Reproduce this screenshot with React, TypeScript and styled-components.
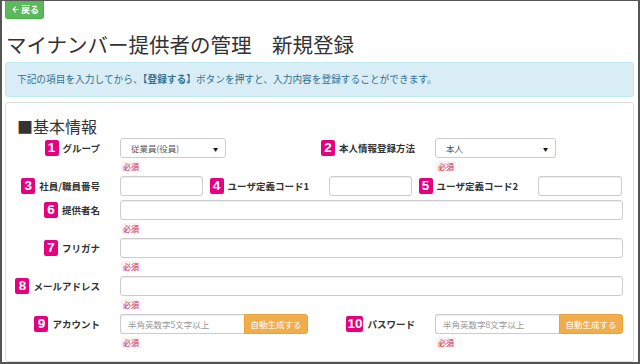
import React from 'react';
import styled, { createGlobalStyle } from 'styled-components';
import { FaArrowLeft } from 'react-icons/fa';

const GlobalStyle = createGlobalStyle`
  * {
    box-sizing: border-box;
  }
  body {
    margin: 0;
    background: #fff;
    font-family: 'Noto Sans CJK JP', 'Liberation Sans', sans-serif;
    color: #333;
  }
`;

type FieldProps = {
  num: number;
  label: string;
  width?: number;
  required?: boolean;
  children: React.ReactNode;
};

const Field = ({ num, label, width, required, children }: FieldProps) => (
  <FieldWrap $width={width}>
    <Label>
      <Badge>{num}</Badge>
      <LabelText>{label}</LabelText>
    </Label>
    <Control>
      {children}
      {required && <Required>必須</Required>}
    </Control>
  </FieldWrap>
);

const App = () => {
  return (
    <Frame>
      <GlobalStyle />
      <BackButton>
        <FaArrowLeft size={7} />
        戻る
      </BackButton>
      <Title>マイナンバー提供者の管理　新規登録</Title>
      <Alert>
        下記の項目を入力してから、<b>【登録する】</b>ボタンを押すと、入力内容を登録することができます。
      </Alert>
      <Panel>
        <Heading>■基本情報</Heading>

        <Row>
          <Field num={1} label="グループ" width={315} required>
            <Select $width={106}>
              <span>従業員(役員)</span>
              <Caret>▼</Caret>
            </Select>
          </Field>
          <Field num={2} label="本人情報登録方法" width={297} required>
            <Select $width={121}>
              <span>本人</span>
              <Caret>▼</Caret>
            </Select>
          </Field>
        </Row>

        <Row>
          <Field num={3} label="社員/職員番号" width={209}>
            <Input $width={83} />
          </Field>
          <Field num={4} label="ユーザ定義コード1" width={209}>
            <Input $width={83} />
          </Field>
          <Field num={5} label="ユーザ定義コード2" width={194}>
            <Input $width={84} />
          </Field>
        </Row>

        <Row>
          <Field num={6} label="提供者名" required>
            <Input />
          </Field>
        </Row>

        <Row>
          <Field num={7} label="フリガナ" required>
            <Input />
          </Field>
        </Row>

        <Row>
          <Field num={8} label="メールアドレス" required>
            <Input />
          </Field>
        </Row>

        <Row>
          <Field num={9} label="アカウント" width={315} required>
            <InputGroup>
              <GroupInput placeholder="半角英数字5文字以上" />
              <GenerateButton>自動生成する</GenerateButton>
            </InputGroup>
          </Field>
          <Field num={10} label="パスワード" width={297} required>
            <InputGroup>
              <GroupInput placeholder="半角英数字8文字以上" />
              <GenerateButton>自動生成する</GenerateButton>
            </InputGroup>
          </Field>
        </Row>
      </Panel>
    </Frame>
  );
};

export default App;

const Frame = styled.div`
  width: 640px;
  height: 364px;
  overflow: hidden;
  border: 2px solid #555;
  border-top-width: 1px;
  padding: 0 4px 0 3px;
`;

const BackButton = styled.button`
  display: flex;
  align-items: center;
  gap: 2px;
  width: 39px;
  height: 18px;
  padding: 0 0 0 6px;
  border: 1px solid #4cae4c;
  border-top: none;
  border-radius: 0 0 3px 3px;
  background: #5cb85c;
  color: #fff;
  font-family: 'Noto Sans CJK JP', sans-serif;
  font-size: 9px;
  font-weight: 700;
  line-height: 1;
`;

const Title = styled.h1`
  margin: 10px 0 0 1px;
  font-size: 20.5px;
  font-weight: 400;
  line-height: 30px;
  color: #333;
  white-space: nowrap;
`;

const Alert = styled.div`
  margin-top: 3px;
  height: 35px;
  padding: 0 11px;
  border: 1px solid #bce8f1;
  border-radius: 3px;
  background: #d9edf7;
  color: #31708f;
  font-size: 9.7px;
  line-height: 33px;
  white-space: nowrap;

  b {
    font-weight: 700;
  }
`;

const Panel = styled.div`
  width: 629px;
  margin-top: 5px;
  height: 260px;
  padding: 13px 10px 0 5px;
  border: 1px solid #ddd;
  border-radius: 3px;
`;

const Heading = styled.h2`
  margin: 0 0 2px 6px;
  font-size: 16px;
  font-weight: 400;
  line-height: 20px;
  color: #333;
`;

const Row = styled.div`
  display: flex;
  width: 612px;
  margin-bottom: 4px;
`;

const FieldWrap = styled.div<{ $width?: number }>`
  display: grid;
  grid-template-columns: 89px minmax(0, 1fr);
  column-gap: 20px;
  align-items: start;
  width: ${(p) => (p.$width ? `${p.$width}px` : '100%')};
  flex: none;
`;

const Label = styled.div`
  display: flex;
  align-items: center;
  justify-content: flex-end;
  gap: 4px;
  height: 20px;
  white-space: nowrap;

  > * {
    flex-shrink: 0;
  }
`;

const Badge = styled.span`
  display: inline-block;
  min-width: 14px;
  height: 16px;
  padding: 0 1px;
  border-radius: 2px;
  background: #e4007f;
  color: #fff;
  font-family: 'Liberation Sans', sans-serif;
  font-size: 13.5px;
  font-weight: 700;
  line-height: 16px;
  text-align: center;
`;

const LabelText = styled.span`
  font-size: 9.5px;
  font-weight: 700;
  color: #333;
`;

const Control = styled.div`
  display: flex;
  flex-direction: column;
  align-items: flex-start;
  min-width: 0;
`;

const Input = styled.input<{ $width?: number }>`
  display: block;
  width: ${(p) => (p.$width ? `${p.$width}px` : '100%')};
  min-width: 0;
  height: 20px;
  margin: 0;
  padding: 0 8px;
  border: 1px solid #ccc;
  border-radius: 3px;
  box-shadow: inset 0 1px 1px rgba(0, 0, 0, 0.075);
  font-family: 'Noto Sans CJK JP', sans-serif;
  font-size: 9px;
`;

const Select = styled.div<{ $width: number }>`
  display: flex;
  align-items: center;
  justify-content: space-between;
  width: ${(p) => p.$width}px;
  height: 20px;
  padding: 0 7px 0 10px;
  border: 1px solid #ccc;
  border-radius: 3px;
  background: #fff;
  color: #555;
  font-size: 8.5px;
`;

const Caret = styled.span`
  color: #111;
  font-size: 5px;
`;

const InputGroup = styled.div`
  display: flex;
  width: 188px;
  height: 20px;
`;

const GroupInput = styled.input`
  flex: 1;
  min-width: 0;
  height: 20px;
  margin: 0;
  padding: 0 7px;
  border: 1px solid #ccc;
  border-right: none;
  border-radius: 3px 0 0 3px;
  box-shadow: inset 0 1px 1px rgba(0, 0, 0, 0.075);
  font-family: 'Noto Sans CJK JP', sans-serif;
  font-size: 8.5px;

  &::placeholder {
    color: #999;
  }
`;

const GenerateButton = styled.button`
  flex: 0 0 64px;
  height: 20px;
  margin: 0;
  padding: 0;
  border: 1px solid #eea236;
  border-radius: 0 3px 3px 0;
  background: #f0ad4e;
  color: #fff;
  font-family: 'Noto Sans CJK JP', sans-serif;
  font-size: 8.5px;
`;

const Required = styled.span`
  display: inline-block;
  margin: 3px 0 0 1px;
  height: 11px;
  padding: 0 2px;
  border-radius: 2px;
  background: #f9f2f4;
  color: #c7254e;
  font-size: 8px;
  line-height: 11px;
`;
